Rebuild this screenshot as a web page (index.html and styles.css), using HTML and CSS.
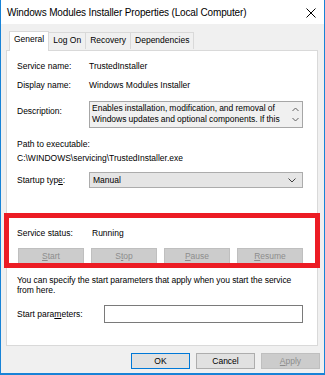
FILE: index.html
```html
<!DOCTYPE html>
<html lang="en">
<head>
    <meta charset="utf-8">
    <title>Windows Modules Installer Properties (Local Computer)</title>
    <link rel="stylesheet" href="styles.css">
</head>
<body>
    <div class="window">
        <header class="titlebar">
            <span class="title-text">Windows Modules Installer Properties (Local Computer)</span>
            <svg class="close-icon" width="10" height="10" viewBox="0 0 10 10">
                <path d="M0.5 0.5 L9.5 9.5 M9.5 0.5 L0.5 9.5" stroke="#000" stroke-width="1" fill="none"/>
            </svg>
        </header>

        <nav class="tabs">
            <div class="tab tab-active">General</div>
            <div class="tab">Log On</div>
            <div class="tab">Recovery</div>
            <div class="tab">Dependencies</div>
        </nav>

        <section class="tab-panel">
            <div class="field-row row-first">
                <span class="field-label">Service name:</span>
                <span class="field-value">TrustedInstaller</span>
            </div>
            <div class="field-row row-second">
                <span class="field-label">Display name:</span>
                <span class="field-value">Windows Modules Installer</span>
            </div>
            <div class="field-row row-desc">
                <span class="field-label desc-label">Description:</span>
                <div class="desc-box">
                    <div class="desc-text">Enables installation, modification, and removal of Windows updates and optional components. If this</div>
                    <div class="desc-scroll">
                        <svg width="7" height="5" viewBox="0 0 7 5"><path d="M0.5 4 L3.5 1 L6.5 4" stroke="#606060" fill="none"/></svg>
                        <svg width="7" height="5" viewBox="0 0 7 5"><path d="M0.5 1 L3.5 4 L6.5 1" stroke="#606060" fill="none"/></svg>
                    </div>
                </div>
            </div>
            <p class="path-label">Path to executable:</p>
            <p class="path-value">C:\WINDOWS\servicing\TrustedInstaller.exe</p>
            <div class="field-row row-startup">
                <span class="field-label">Startup typ<u>e</u>:</span>
                <div class="combo">
                    <span>Manual</span>
                    <svg width="8" height="5" viewBox="0 0 8 5"><path d="M0.5 0.5 L4 4 L7.5 0.5" stroke="#404040" fill="none"/></svg>
                </div>
            </div>

            <div class="field-row row-status">
                <span class="field-label">Service status:</span>
                <span class="field-value status-value">Running</span>
            </div>
            <div class="service-buttons">
                <button class="btn btn-disabled"><u>S</u>tart</button>
                <button class="btn btn-disabled">S<u>t</u>op</button>
                <button class="btn btn-disabled"><u>P</u>ause</button>
                <button class="btn btn-disabled"><u>R</u>esume</button>
            </div>

            <p class="hint">You can specify the start parameters that apply when you start the service from here.</p>
            <div class="field-row row-params">
                <span class="field-label params-label">Start para<u>m</u>eters:</span>
                <div class="text-input"></div>
            </div>
        </section>

        <footer class="dialog-buttons">
            <button class="btn btn-default">OK</button>
            <button class="btn">Cancel</button>
            <button class="btn btn-disabled"><u>A</u>pply</button>
        </footer>

        <div class="highlight-box"></div>
    </div>
</body>
</html>
```

FILE: styles.css
```css
* {
    margin: 0;
    padding: 0;
    box-sizing: border-box;
}

body {
    width: 325px;
    height: 375px;
    font-family: "Liberation Sans", Arial, sans-serif;
    font-size: 8.5px;
    color: #000;
    background: #fff;
}

.window {
    position: relative;
    width: 325px;
    height: 375px;
    border: 1px solid #1883d7;
    border-top: none;
    border-bottom-width: 2px;
    background: #f0f0f0;
    display: flex;
    flex-direction: column;
}

.titlebar {
    height: 24px;
    background: #fff;
    display: flex;
    align-items: center;
    justify-content: space-between;
    padding: 0 8px 0 6px;
}

.title-text {
    font-size: 10px;
    letter-spacing: -0.15px;
    margin-top: 1px;
}

.close-icon {
    margin-top: 2px;
}

/* tabs */
.tabs {
    display: flex;
    align-items: flex-end;
    margin-top: 7px;
    padding-left: 8px;
    height: 19px;
    position: relative;
    z-index: 1;
}

.tab {
    height: 17px;
    padding: 0 4px;
    line-height: 15px;
    border: 1px solid #d9d9d9;
    border-bottom: none;
    border-left: none;
    background: #f0f0f0;
    margin-bottom: 1px;
}

.tab-active {
    height: 20px;
    margin-bottom: -1px;
    background: #fff;
    border-left: 1px solid #d9d9d9;
    line-height: 14px;
    padding: 0 4px 0 4px;
}

.tab-panel {
    height: 296px;
    margin: 0 6px 0 5px;
    background: #fff;
    border: 1px solid #d9d9d9;
    padding: 0 14px 0 10px;
}

.field-row {
    display: flex;
    align-items: center;
}

.field-label {
    width: 72px;
    flex-shrink: 0;
}

.row-first {
    margin-top: 6px;
    height: 18px;
}

.row-second {
    margin-top: 1px;
    height: 18px;
}

.row-desc {
    margin-top: 7px;
    align-items: flex-start;
}

.desc-label {
    padding-top: 5px;
}

.desc-box {
    flex: 1;
    height: 27px;
    border: 1px solid #a6a6a6;
    background: #f0f0f0;
    display: flex;
}

.desc-text {
    flex: 1;
    padding: 1px 0 0 2px;
    line-height: 11px;
    height: 25px;
    overflow: hidden;
    word-spacing: -0.3px;
}

.desc-scroll {
    width: 14px;
    display: flex;
    flex-direction: column;
    justify-content: center;
    align-items: center;
    gap: 5px;
}

.path-label {
    margin-top: 9px;
    line-height: 14px;
}

.path-value {
    line-height: 14px;
}

.row-startup {
    margin-top: 7px;
}

.combo {
    flex: 1;
    height: 16px;
    background: #e5e5e5;
    border: 1px solid #acacac;
    display: flex;
    align-items: center;
    justify-content: space-between;
    padding: 0 6px 0 3px;
}

.row-status {
    margin-top: 38px;
    height: 14px;
}

.status-value {
    padding-left: 3px;
}

.service-buttons {
    margin-top: 8px;
    display: grid;
    grid-template-columns: repeat(4, 1fr);
    gap: 7px;
    padding-left: 1px;
}

.btn {
    height: 16px;
    font-family: inherit;
    font-size: 8.5px;
    color: #000;
    background: #e1e1e1;
    border: 1px solid #adadad;
}

.btn u {
    text-underline-offset: 1px;
}

.btn-disabled {
    background: #cccccc;
    border-color: #bfbfbf;
    color: #8c8c8c;
}

.btn-default {
    border-color: #0078d7;
}

.hint {
    margin-top: 11px;
    line-height: 10px;
    margin-right: -6px;
    letter-spacing: -0.05px;
}

.row-params {
    margin-top: 10px;
}

.params-label {
    width: 87px;
}

.text-input {
    flex: 1;
    height: 18px;
    border: 1px solid #7a7a7a;
    background: #fff;
}

.dialog-buttons {
    display: flex;
    justify-content: flex-end;
    gap: 6px;
    margin-top: 7px;
    padding-right: 4px;
}

.dialog-buttons .btn {
    width: 59px;
}

/* annotation drawn on top of the dialog */
.highlight-box {
    position: absolute;
    left: 3px;
    top: 213px;
    width: 316px;
    height: 55px;
    border: 5px solid #ec1c24;
    pointer-events: none;
}
```
